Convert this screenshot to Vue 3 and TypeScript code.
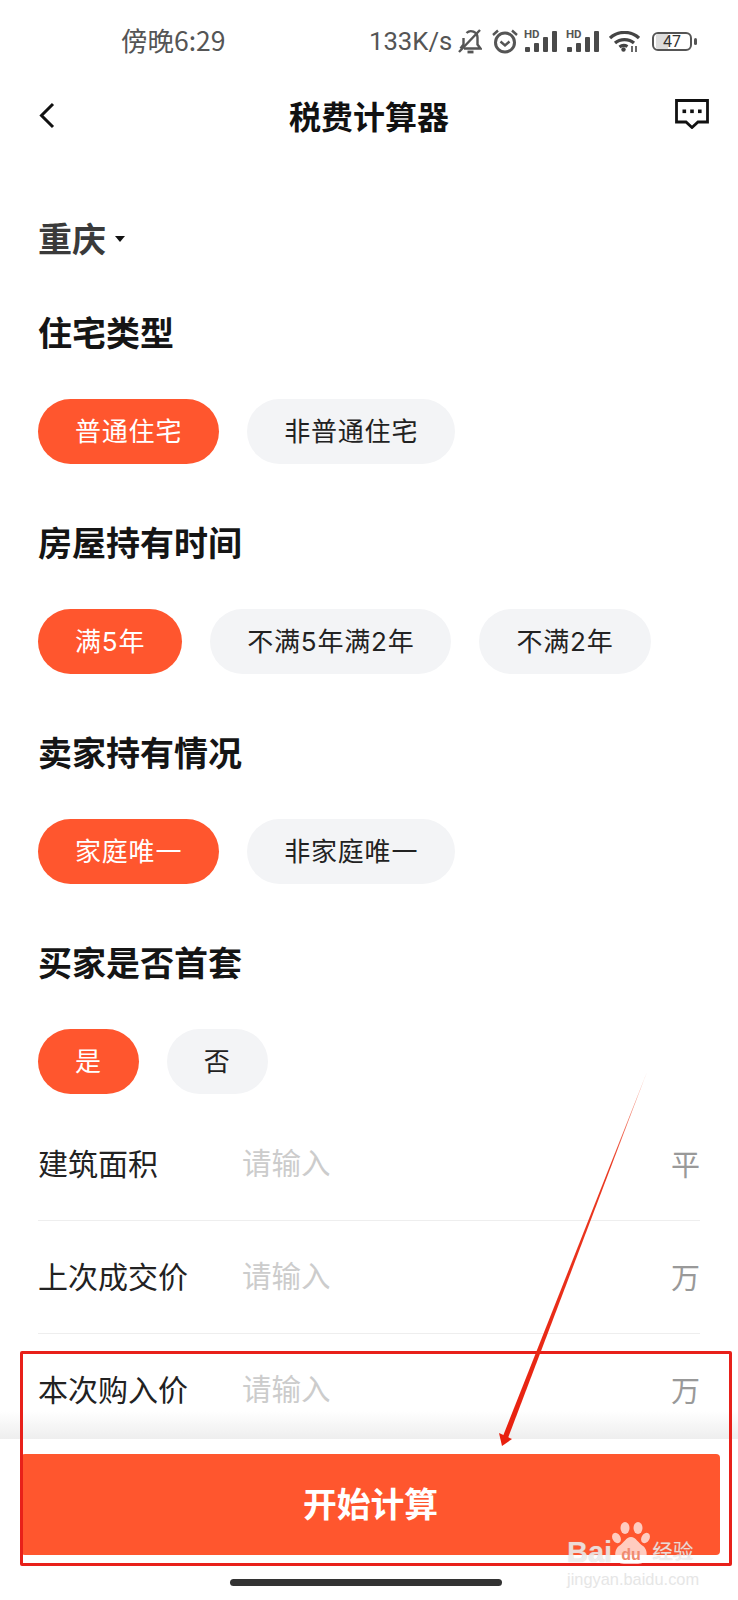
<script setup lang="ts">
import { ref } from "vue";

interface Group {
    title: string;
    options: string[];
}

interface Field {
    label: string;
    unit: string;
}

const groups = ref<Group[]>([
    { title: "住宅类型", options: ["普通住宅", "非普通住宅"] },
    { title: "房屋持有时间", options: ["满5年", "不满5年满2年", "不满2年"] },
    { title: "卖家持有情况", options: ["家庭唯一", "非家庭唯一"] },
    { title: "买家是否首套", options: ["是", "否"] }
]);

const fields: Field[] = [
    { label: "建筑面积", unit: "平" },
    { label: "上次成交价", unit: "万" },
    { label: "本次购入价", unit: "万" }
];

const signalBars = [
    { x: 1, h: 5 },
    { x: 10, h: 9 },
    { x: 19, h: 15 },
    { x: 28, h: 21 }
];
</script>

<template>
    <div class="page">
        <div class="status">
            <span class="time">傍晚6:29</span>
            <span class="speed">133K/s</span>
            <svg class="ic-bell" width="24" height="26" viewBox="0 0 24 26" fill="none" stroke="#555" stroke-width="2.400">
                <path d="M6 20.500h16.500l-3-4V9.500A6.500 6.500 0 0 0 8.500 5" />
                <path d="M5.500 10v6.500l-3 4" />
                <path d="M9.500 24h6" stroke-width="2.800" />
                <path d="M1 24L22 2" />
            </svg>
            <svg class="ic-alarm" width="28" height="26" viewBox="0 0 28 26" fill="none" stroke="#555" stroke-width="3">
                <circle cx="14" cy="14.500" r="9.500" />
                <path d="M9.500 13.500l4.500 4 4.500-4" stroke-width="2.400" />
                <path d="M2 7L7 2.500M26 7L21 2.500" stroke-width="2.400" />
            </svg>
            <svg v-for="n in 2" :key="n" class="ic-signal" width="34" height="26" viewBox="0 -4 34 26">
                <text x="0" y="8" class="hd">HD</text>
                <rect
                    v-for="bar in signalBars"
                    :key="bar.x"
                    :x="bar.x"
                    :y="22 - bar.h"
                    width="5"
                    :height="bar.h"
                    rx="1"
                    fill="#4a4a4a"
                />
            </svg>
            <svg class="ic-wifi" width="31" height="21" viewBox="0 0 31 21" fill="none" stroke="#444" stroke-width="3.200">
                <path d="M1 7C9 -0.500 22 -0.500 30 7" />
                <path d="M6 12C11 7.500 20 7.500 25 12" />
                <path d="M10.500 16C13 14 16 14 18.500 15.500" />
                <circle cx="14.500" cy="18.500" r="2.200" fill="#444" stroke="none" />
                <path d="M23 21v-6M27 21v-6" stroke-width="1.600" />
            </svg>
            <div class="battery">
                <span class="level" />
                <span class="num">47</span>
            </div>
            <span class="cap" />
        </div>

        <div class="nav">
            <svg class="ic-back" width="18" height="27" viewBox="0 0 18 27" fill="none" stroke="#111" stroke-width="3">
                <path d="M15 2L3.500 13.500L15 25" />
            </svg>
            <span class="nav-title">税费计算器</span>
            <svg class="ic-msg" width="34" height="30" viewBox="0 0 34 30" fill="none">
                <path d="M1.500 1.500h31v21.500H23l-6 5.500-6-5.500H1.500z" stroke="#111" stroke-width="2.800" />
                <rect x="7.500" y="10.500" width="3.600" height="3.600" fill="#111" />
                <rect x="15.200" y="10.500" width="3.600" height="3.600" fill="#111" />
                <rect x="23" y="10.500" width="3.600" height="3.600" fill="#111" />
            </svg>
        </div>

        <div class="city">
            <span>重庆</span>
            <i class="caret" />
        </div>

        <section v-for="group in groups" :key="group.title" class="group">
            <h2>{{ group.title }}</h2>
            <div class="chips">
                <span
                    v-for="(opt, i) in group.options"
                    :key="opt"
                    class="chip"
                    :class="{ active: i === 0 }"
                >{{ opt }}</span>
            </div>
        </section>

        <div class="fields">
            <div v-for="field in fields" :key="field.label" class="field">
                <span class="label">{{ field.label }}</span>
                <span class="placeholder">请输入</span>
                <span class="unit">{{ field.unit }}</span>
            </div>
        </div>

        <div class="footer">
            <button class="submit">开始计算</button>
            <div class="home-bar" />
        </div>

        <!-- 标注层 -->
        <div class="red-box" />
        <svg class="arrow" width="738" height="1600" viewBox="0 0 738 1600">
            <defs>
                <linearGradient id="arrowFade" x1="647" y1="1072" x2="502" y2="1445" gradientUnits="userSpaceOnUse">
                    <stop offset="0" stop-color="#f7b0a0" />
                    <stop offset="0.25" stop-color="#ea3a22" />
                    <stop offset="1" stop-color="#e8200f" />
                </linearGradient>
            </defs>
            <polygon points="647,1072 503,1436 508,1438" fill="url(#arrowFade)" />
            <polygon points="502,1446 499,1433 512,1439" fill="#e8200f" />
        </svg>

        <div class="watermark">
            <div class="wm-top">
                <span class="wm-bai">Bai</span>
                <svg class="wm-paw" width="38" height="43" viewBox="0 0 38 43">
                    <g fill="rgba(255,255,255,.7)">
                        <ellipse cx="13" cy="6" rx="4.500" ry="6" />
                        <ellipse cx="26" cy="6" rx="4.500" ry="6" />
                        <ellipse cx="4.500" cy="16" rx="4" ry="5.500" transform="rotate(-30 4.500 16)" />
                        <ellipse cx="33.500" cy="16" rx="4" ry="5.500" transform="rotate(30 33.500 16)" />
                        <path d="M19 15c5 0 7 6 12 9 6 4 5 18-5 18H12c-10 0-11-14-5-18 5-3 7-9 12-9z" />
                    </g>
                    <text x="19" y="38" class="wm-du">du</text>
                </svg>
                <span class="wm-jy">经验</span>
            </div>
            <div class="wm-url">jingyan.baidu.com</div>
        </div>
    </div>
</template>

<style scoped>
.page {
    position: relative;
    width: 738px;
    height: 1600px;
    overflow: hidden;
    background: #fff;
    font-family: "Noto Sans CJK SC", "Noto Sans", sans-serif;
    color: #222;
}

.status {
    display: flex;
    align-items: center;
    height: 82px;
    color: #555;
}

.time {
    width: 248px;
    margin: -3px 0 0 121px;
    font-size: 26.500px;
}

.speed {
    width: 89px;
    font-family: Roboto, "Noto Sans", sans-serif;
    font-size: 25.700px;
}

.ic-bell {
    margin-right: 9px;
}

.ic-alarm {
    margin-right: 5px;
}

.ic-signal {
    margin: -4px 8px 0 0;
    overflow: visible;
}

.hd {
    font-family: Roboto, sans-serif;
    font-size: 11.500px;
    font-weight: 700;
    fill: #555;
}

.ic-wifi {
    margin-left: 1px;
    margin-right: 12px;
}

.battery {
    position: relative;
    width: 40px;
    height: 19px;
    box-sizing: border-box;
    border: 2px solid #555;
    border-radius: 6px;
    overflow: hidden;
}

.level {
    display: block;
    width: 12px;
    height: 100%;
    margin-left: 2px;
    background: #ddd;
}

.num {
    position: absolute;
    inset: 0;
    text-align: center;
    font-family: Roboto, sans-serif;
    font-size: 16px;
    line-height: 15px;
    color: #333;
}

.cap {
    width: 3px;
    height: 7px;
    margin-left: 2px;
    border-radius: 2px;
    background: #555;
}

.nav {
    position: relative;
    display: flex;
    align-items: center;
    justify-content: space-between;
    height: 66px;
    padding: 0 29px 0 38px;
}

.ic-msg {
    margin-top: -3px;
}

.nav-title {
    position: absolute;
    left: 0;
    right: 0;
    text-align: center;
    font-size: 32px;
    font-weight: 700;
    color: #111;
}

.city {
    display: flex;
    align-items: center;
    height: 50px;
    margin: 64px 0 45px 38px;
    font-size: 34px;
    font-weight: 700;
    color: #3a3a3a;
}

.caret {
    margin: 3px 0 0 9px;
    border-left: 5px solid transparent;
    border-right: 5px solid transparent;
    border-top: 6px solid #111;
}

.group {
    padding: 0 38px;
    margin-bottom: 53px;
}

.group h2 {
    margin: 0 0 42px;
    height: 50px;
    line-height: 50px;
    font-size: 34px;
    font-weight: 700;
    color: #151515;
}

.chips {
    display: flex;
    gap: 28px;
}

.chip {
    height: 65px;
    line-height: 66px;
    padding: 0 37px;
    border-radius: 33px;
    background: #f3f4f6;
    font-family: Inter, "Noto Sans CJK SC", sans-serif;
    font-size: 26px;
    letter-spacing: 0.800px;
    color: #222;
}

.chip.active {
    background: #ff562e;
    color: #fff;
}

.fields {
    margin: -39px 38px 0;
}

.field {
    display: flex;
    align-items: center;
    height: 112px;
    border-bottom: 1px solid #eee;
}

.field:last-child {
    border-bottom: 0;
}

.label {
    width: 204px;
    margin-top: -4px;
    font-size: 30px;
    color: #222;
}

.placeholder {
    flex: 1;
    margin-top: -6px;
    font-size: 29.500px;
    color: #ccc;
}

.unit {
    margin-top: -2px;
    font-size: 29px;
    color: #999;
}

.footer {
    position: absolute;
    left: 0;
    right: 0;
    bottom: 0;
    height: 161px;
    background: #fff;
    display: flex;
    flex-direction: column;
    box-sizing: border-box;
    padding: 15px 18px 14px 21px;
}

.footer::before {
    content: "";
    position: absolute;
    left: 0;
    right: 0;
    top: -28px;
    height: 28px;
    background: linear-gradient(to bottom, rgba(238, 238, 238, 0), #eee);
}

.submit {
    height: 101px;
    padding: 0 0 4px;
    border: 0;
    border-radius: 4px;
    background: #ff562e;
    color: #fff;
    font-family: inherit;
    font-size: 33.800px;
    font-weight: 700;
}

.home-bar {
    width: 272px;
    height: 7px;
    margin: 24px 0 0 209px;
    border-radius: 4px;
    background: #333;
}

.red-box {
    position: absolute;
    left: 20px;
    top: 1351px;
    width: 712px;
    height: 215px;
    box-sizing: border-box;
    border: 3px solid #e8201a;
    border-radius: 2px;
}

.arrow {
    position: absolute;
    left: 0;
    top: 0;
    pointer-events: none;
}

.watermark {
    position: absolute;
    left: 567px;
    top: 1521px;
    width: 140px;
    color: rgba(255, 255, 255, 0.7);
}

.wm-top {
    display: flex;
    align-items: flex-end;
    height: 46px;
}

.wm-bai {
    font-family: "Liberation Sans", sans-serif;
    font-size: 29px;
    font-weight: 700;
    line-height: 29px;
    text-shadow: 0 0 1px rgba(170, 170, 170, 0.7);
}

.wm-paw {
    flex-shrink: 0;
    margin-bottom: 2px;
}

.wm-du {
    font-family: "Liberation Sans", sans-serif;
    font-size: 16px;
    font-weight: 700;
    text-anchor: middle;
    fill: #f08a70;
}

.wm-jy {
    margin: 0 0 6px 2px;
    font-size: 20.500px;
    line-height: 21px;
    white-space: nowrap;
    text-shadow: 0 0 1px rgba(170, 170, 170, 0.7);
}

.wm-url {
    margin-top: 3px;
    font-family: "Liberation Sans", sans-serif;
    font-size: 16.400px;
    line-height: 18px;
    color: #e6e6e6;
}
</style>
